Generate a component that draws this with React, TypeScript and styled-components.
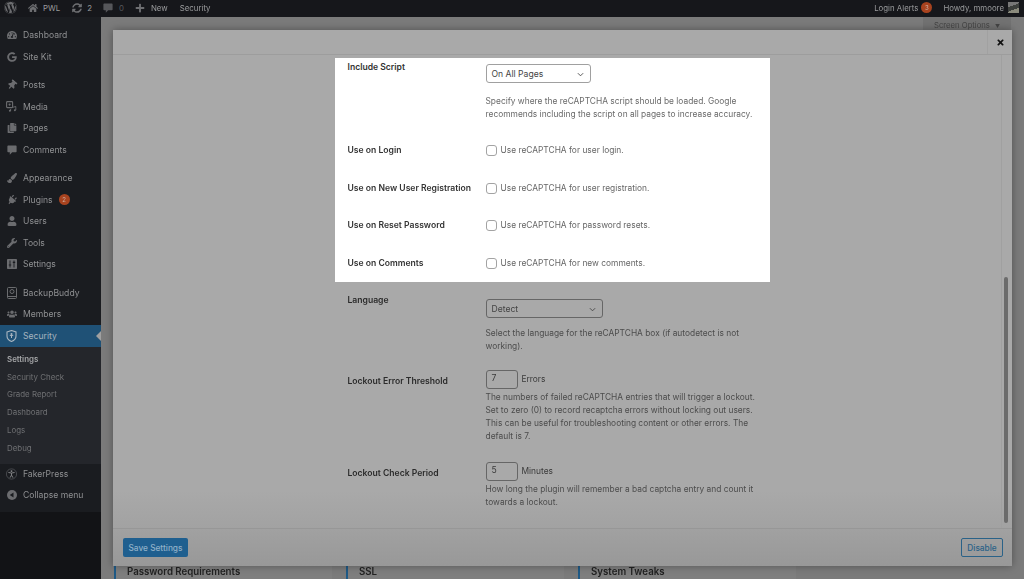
import React from "react";
import styled, { createGlobalStyle } from "styled-components";
import {
  FaWordpress, FaHome, FaSyncAlt, FaPlus, FaTachometerAlt, FaGoogle, FaThumbtack,
  FaCopy, FaPaintBrush, FaPlug, FaUser, FaWrench, FaUsers, FaTimes,
} from "react-icons/fa";

const Global = createGlobalStyle`
  html, body { margin: 0; padding: 0; height: 100%; overflow: hidden; background: #7b7b7b; }
  * { box-sizing: border-box; }
  body { font-family: Inter, "Liberation Sans", sans-serif; }
`;

const Frame = styled.div`
  width: 1024px; height: 579px; display: grid; grid-template-rows: 17px 1fr; grid-template-columns: 101px 1fr;
  overflow: hidden; filter: blur(0.45px); position: relative;
`;
const AdminBar = styled.header`
  grid-column: 1 / 3; background: #16171b; color: #9a9b9d; display: flex; align-items: center;
  font-size: 7.85px; padding: 0 5px 2px 4px;
`;
const BarItem = styled.span<{ $gap?: number; $after?: number; $dim?: boolean }>`
  display: inline-flex; align-items: center; gap: ${(p) => p.$gap ?? 5}px; margin-right: ${(p) => p.$after ?? 11}px;
  color: ${(p) => (p.$dim ? "#55565a" : "#9a9b9d")}; white-space: nowrap;
  svg { color: #6d6e71; font-size: 10px; }
`;
const BarSpacer = styled.div` flex: 1; `;
const Badge = styled.span`
  display: inline-flex; align-items: center; justify-content: center; width: 11px; height: 11px;
  border-radius: 50%; background: #a8431f; color: #c9a79a; font-size: 6px; font-weight: 500;
`;
const Avatar = styled.span`
  width: 11px; height: 11px; background: linear-gradient(160deg, #777 0 35%, #3c3f3c 35% 65%, #8a8a7c 65%); margin-left: 4px;
`;
const Sidebar = styled.nav`
  background: #121316; color: #8f9092; font-size: 8.6px; display: flex; flex-direction: column;
`;
const Menu = styled.div`
  background: #1a1c20; height: 495px; padding-top: 7.5px; display: flex; flex-direction: column; flex: none;
`;
const Item = styled.div<{ $active?: boolean; $gapBefore?: number; $h?: number }>`
  height: ${(p) => p.$h ?? 21.5}px; display: flex; align-items: center; padding-left: 6px; gap: 6px; position: relative; flex: none;
  margin-top: ${(p) => p.$gapBefore ?? 0}px;
  background: ${(p) => (p.$active ? "#1f5176" : "transparent")};
  color: ${(p) => (p.$active ? "#a6b4bf" : "#8f9092")};
  ${(p) => p.$active && `&::after { content: ""; position: absolute; right: 0; top: 6px; border: 5px solid transparent; border-right-color: #a0a0a0; border-left-width: 0; }`}
`;
const IconSlot = styled.span<{ $tilt?: number }>`
  width: 11px; height: 11px; display: inline-flex; align-items: center; justify-content: center; color: #6b6c6f; font-size: 10px; flex: none;
  svg { display: block; transform: rotate(${(p) => p.$tilt ?? 0}deg); }
`;
const Submenu = styled.div`
  background: #24262b; padding: 3.5px 0 7px 7px; display: flex; flex-direction: column; color: #6f7073; font-size: 7.9px;
`;
const SubItem = styled.div<{ $current?: boolean }>`
  height: 17.8px; display: flex; align-items: center;
  ${(p) => p.$current && `color: #a4a5a7; font-weight: 600;`}
`;
const Page = styled.main`
  position: relative; background: #7b7b7b; display: flex; flex-direction: column; justify-content: space-between; overflow: hidden; padding-left: 13px;
`;
const ScreenTab = styled.div`
  align-self: flex-end; margin-right: 13px; width: 88px; height: 13px; background: #727272; color: #444;
  font-size: 7.7px; display: flex; align-items: center; gap: 5px; padding: 4px 0 0 11px; white-space: nowrap;
`;
const Caret = styled.span` font-size: 5px; `;
const CardRow = styled.div` display: flex; gap: 14px; height: 14px; `;
const Card = styled.section`
  width: 218px; height: 40px; background: #7f7f7f; border-left: 2px solid #1f5a86; padding: 1px 0 0 11px;
  font-size: 9.7px; font-weight: 600; color: #222; white-space: nowrap;
`;
const Modal = styled.div`
  position: absolute; left: 12px; top: 13px; width: 899px; height: 536px; background: #a9a9a9;
  display: flex; flex-direction: column; box-shadow: 0 0 8px rgba(0,0,0,.35); color: #2b2b2b;
`;
const ModalHeader = styled.div`
  height: 25px; flex: none; border-bottom: 1px solid #9d9d9d; display: flex; justify-content: flex-end;
`;
const CloseBox = styled.div`
  width: 25px; border-left: 1px solid #a1a1a1; display: flex; align-items: center; justify-content: center; color: #111; font-size: 9px;
`;
const ModalBody = styled.div`
  flex: 1; min-height: 0; display: flex; overflow: hidden;
  background: linear-gradient(to bottom, #a9a9a9 0 92%, #a2a2a2 100%);
`;
const ScrollPane = styled.div`
  flex: 1; border-right: 1px solid #a0a0a0; margin-right: 2px; display: flex; flex-direction: column; align-items: center; padding: 3px 0 0 0;
`;
const Form = styled.div` width: 435px; margin-left: -10px; display: flex; flex-direction: column; flex: none; `;
const Spotlight = styled.div` background: #fff; color: #333; padding: 0 13px; height: 224px; flex: none; `;
const Dimmed = styled.div` padding: 0 13px; color: #2b2b2b; `;
const Row = styled.div<{ $h: number }>`
  display: grid; grid-template-columns: 138px 1fr; height: ${(p) => p.$h}px;
`;
const Label = styled.div<{ $top?: number }>`
  font-size: 8.6px; font-weight: 600; line-height: 12px; padding-top: ${(p) => p.$top ?? 0}px; white-space: nowrap;
`;
const Field = styled.div<{ $top?: number }>`
  padding-top: ${(p) => p.$top ?? 0}px; font-size: 8.4px; line-height: 13px; white-space: nowrap;
`;
const Select = styled.div<{ $w: number; $dim?: boolean; $after: number }>`
  width: ${(p) => p.$w}px; height: 19px; border: 1px solid ${(p) => (p.$dim ? "#666" : "#a0a0a0")}; border-radius: 3px; display: flex; align-items: center;
  justify-content: space-between; padding: 1px 6px 0 5px; font-size: 8.6px; color: #444; margin-bottom: ${(p) => p.$after}px;
`;
const Desc = styled.div<{ $light?: boolean }>`
  color: ${(p) => (p.$light ? "#6a6a6a" : "#4c4c4c")}; font-size: 8.4px; line-height: 13px;
`;
const CheckLine = styled.div` display: flex; align-items: center; gap: 4px; color: #666; font-size: 8.4px; `;
const Box = styled.span` width: 11px; height: 11px; border: 1px solid #a3a3a3; border-radius: 3px; background: #fff; flex: none; `;
const NumberLine = styled.div` display: flex; align-items: center; gap: 4px; margin-bottom: 2px; color: #3a3a3a; `;
const NumberBox = styled.div`
  width: 32px; height: 19px; border: 1px solid #666; border-radius: 3px; padding: 0 0 2px 5px; display: flex; align-items: center; font-size: 8.6px;
`;
const ScrollTrack = styled.div` width: 6px; margin-right: 2px; display: flex; flex-direction: column; justify-content: flex-end; padding-bottom: 5px; `;
const ScrollThumb = styled.div` width: 4px; height: 246px; background: #6b6b6b; border-radius: 2px; `;
const ModalFooter = styled.div`
  height: 38px; flex: none; border-top: 1px solid #979797; background: linear-gradient(#a1a1a1, #989898); display: flex; align-items: center;
  justify-content: space-between; padding: 0 9px 0 10px;
`;
const PrimaryButton = styled.button`
  width: 65px; height: 19px; border: 0; border-radius: 2px; background: #1f5f8f; color: #8fb0c8; font: 500 8.3px Inter, sans-serif; padding: 0;
`;
const SecondaryButton = styled.button`
  width: 42px; height: 19px; border: 1px solid #2a6288; border-radius: 2px; background: transparent; color: #2a6288; font: 500 8.3px Inter, sans-serif; padding: 0;
`;

const Chevron = () => (
  <svg width="7" height="5" viewBox="0 0 8 5"><path d="M1 1l3 3 3-3" fill="none" stroke="#444" strokeWidth="1" /></svg>
);
const Shield = () => (
  <svg width="11" height="12" viewBox="0 0 11 12"><path d="M1 2l4.5-1.5L10 2v4c0 3-2.5 4.7-4.5 5.5C3.5 10.7 1 9 1 6z" fill="none" stroke="#a9b6c0" strokeWidth="1.1" /><circle cx="5.5" cy="4" r="1" fill="#a9b6c0" /><path d="M5.5 5v3M3.8 5.4h3.4" stroke="#a9b6c0" /></svg>
);
const Backup = () => (
  <svg width="10" height="12" viewBox="0 0 10 12"><rect x=".5" y=".5" width="9" height="11" rx="1" fill="none" stroke="#6b6c6f" /><circle cx="5" cy="4.5" r="2" fill="none" stroke="#6b6c6f" /><path d="M1 9.5h8" stroke="#6b6c6f" /></svg>
);
const Collapse = () => (
  <svg width="10" height="10" viewBox="0 0 10 10"><circle cx="5" cy="5" r="5" fill="#6b6c6f" /><path d="M6.5 2.4v5.2L2.8 5z" fill="#1a1c20" /></svg>
);
const Bubble = ({ size = 10, color = "#6b6c6f" }: { size?: number; color?: string }) => (
  <svg width={size} height={size} viewBox="0 0 10 10"><path d="M1.2 0.5h7.6a.8.8 0 0 1 .8.8v5.2a.8.8 0 0 1-.8.8H5.2L2.8 9.8V7.3H1.2a.8.8 0 0 1-.8-.8V1.3a.8.8 0 0 1 .8-.8z" fill={color} /></svg>
);
const MediaIcon = () => (
  <svg width="11" height="11" viewBox="0 0 11 11"><rect x=".6" y=".6" width="6" height="6" rx=".8" fill="none" stroke="#6b6c6f" strokeWidth="1.1" /><circle cx="3.6" cy="3.6" r="1.1" fill="#6b6c6f" /><path d="M4.6 10V8M9.8 9V5.5L6.5 6.4" fill="none" stroke="#6b6c6f" strokeWidth=".9" /><circle cx="3.9" cy="9.8" r="1" fill="#6b6c6f" /><circle cx="8.9" cy="9.2" r="1" fill="#6b6c6f" /></svg>
);
const SettingsIcon = () => (
  <svg width="10" height="10" viewBox="0 0 10 10"><rect width="10" height="10" rx=".8" fill="#6b6c6f" /><path d="M3 1.5v7M7 1.5v7" stroke="#1a1c20" strokeWidth=".9" /><path d="M1.8 6h2.4M5.8 3.4h2.4" stroke="#1a1c20" strokeWidth="1.1" /></svg>
);
const Figure = () => (
  <svg width="12" height="12" viewBox="0 0 12 12"><circle cx="6" cy="6" r="5.6" fill="none" stroke="#6b6c6f" strokeWidth=".6" /><circle cx="6" cy="2.8" r="1" fill="#8a8b8d" /><path d="M2.6 4.3L6 5l3.4-.7M6 5v2.2M6 7.2L4.4 10M6 7.2L7.6 10" fill="none" stroke="#8a8b8d" strokeWidth="1" /></svg>
);

type Entry = { icon: React.ReactNode; t: string; badge?: string; tilt?: number };
const first: Entry[] = [
  { icon: <FaTachometerAlt />, t: "Dashboard" },
  { icon: <FaGoogle />, t: "Site Kit" },
];
const second: Entry[] = [
  { icon: <FaThumbtack />, t: "Posts", tilt: 40 },
  { icon: <MediaIcon />, t: "Media" },
  { icon: <FaCopy />, t: "Pages" },
  { icon: <Bubble />, t: "Comments" },
];
const third: Entry[] = [
  { icon: <FaPaintBrush />, t: "Appearance" },
  { icon: <FaPlug />, t: "Plugins", badge: "2", tilt: 40 },
  { icon: <FaUser />, t: "Users" },
  { icon: <FaWrench />, t: "Tools" },
  { icon: <SettingsIcon />, t: "Settings" },
];
const subs = ["Security Check", "Grade Report", "Dashboard", "Logs", "Debug"];
const checks = [
  ["Use on Login", "Use reCAPTCHA for user login."],
  ["Use on New User Registration", "Use reCAPTCHA for user registration."],
  ["Use on Reset Password", "Use reCAPTCHA for password resets."],
  ["Use on Comments", "Use reCAPTCHA for new comments."],
];

export default function App() {
  const renderItem = (i: Entry, gap?: number) => (
    <Item key={i.t} $gapBefore={gap}>
      <IconSlot $tilt={i.tilt}>{i.icon}</IconSlot>
      {i.t}
      {i.badge && <Badge>{i.badge}</Badge>}
    </Item>
  );
  return (
    <Frame>
      <Global />
      <AdminBar>
        <BarItem $after={11}><FaWordpress style={{ fontSize: 13 }} /></BarItem>
        <BarItem $after={12}><FaHome />PWL</BarItem>
        <BarItem><FaSyncAlt />2</BarItem>
        <BarItem $dim $gap={6}><Bubble color="#55565a" />0</BarItem>
        <BarItem $gap={6} $after={12}><FaPlus />New</BarItem>
        <BarItem>Security</BarItem>
        <BarSpacer />
        <BarItem $gap={3}>Login Alerts<Badge>3</Badge></BarItem>
        <BarItem $after={0} $gap={0}>Howdy, mmoore<Avatar /></BarItem>
      </AdminBar>
      <Sidebar>
        <Menu>
          {first.map((i) => renderItem(i))}
          {second.map((i, n) => renderItem(i, n === 0 ? 7 : 0))}
          {third.map((i, n) => renderItem(i, n === 0 ? 7 : 0))}
          <Item $gapBefore={7}><IconSlot><Backup /></IconSlot>BackupBuddy</Item>
          <Item><IconSlot><FaUsers /></IconSlot>Members</Item>
          <Item $active><IconSlot><Shield /></IconSlot>Security</Item>
          <Submenu>
            <SubItem $current>Settings</SubItem>
            {subs.map((s) => <SubItem key={s}>{s}</SubItem>)}
          </Submenu>
          <Item $h={20.5}><IconSlot><Figure /></IconSlot>FakerPress</Item>
          <Item><IconSlot><Collapse /></IconSlot>Collapse menu</Item>
        </Menu>
      </Sidebar>
      <Page>
        <ScreenTab>Screen Options <Caret>▼</Caret></ScreenTab>
        <CardRow>
          <Card>Password Requirements</Card>
          <Card>SSL</Card>
          <Card>System Tweaks</Card>
        </CardRow>
        <Modal>
          <ModalHeader><CloseBox><FaTimes /></CloseBox></ModalHeader>
          <ModalBody>
            <ScrollPane>
              <Form>
                <Spotlight>
                  <Row $h={72}>
                    <Label $top={2.5}>Include Script</Label>
                    <Field $top={6}>
                      <Select $w={105} $after={12}>On All Pages<Chevron /></Select>
                      <Desc $light>Specify where the reCAPTCHA script should be loaded. Google<br />recommends including the script on all pages to increase accuracy.</Desc>
                    </Field>
                  </Row>
                  {checks.map(([l, d], n) => (
                    <Row key={l} $h={n === 3 ? 37 : 37.7}>
                      <Label $top={14}>{l}</Label>
                      <Field $top={14}><CheckLine><Box />{d}</CheckLine></Field>
                    </Row>
                  ))}
                </Spotlight>
                <Dimmed>
                  <Row $h={81}>
                    <Label $top={12}>Language</Label>
                    <Field $top={17}>
                      <Select $w={117} $dim $after={9}>Detect<Chevron /></Select>
                      <Desc>Select the language for the reCAPTCHA box (if autodetect is not<br />working).</Desc>
                    </Field>
                  </Row>
                  <Row $h={92}>
                    <Label $top={12}>Lockout Error Threshold</Label>
                    <Field $top={7}>
                      <NumberLine><NumberBox>7</NumberBox>Errors</NumberLine>
                      <Desc>The numbers of failed reCAPTCHA entries that will trigger a lockout.<br />Set to zero (0) to record recaptcha errors without locking out users.<br />This can be useful for troubleshooting content or other errors. The<br />default is 7.</Desc>
                    </Field>
                  </Row>
                  <Row $h={60}>
                    <Label $top={12}>Lockout Check Period</Label>
                    <Field $top={7}>
                      <NumberLine><NumberBox>5</NumberBox>Minutes</NumberLine>
                      <Desc>How long the plugin will remember a bad captcha entry and count it<br />towards a lockout.</Desc>
                    </Field>
                  </Row>
                </Dimmed>
              </Form>
            </ScrollPane>
            <ScrollTrack><ScrollThumb /></ScrollTrack>
          </ModalBody>
          <ModalFooter>
            <PrimaryButton>Save Settings</PrimaryButton>
            <SecondaryButton>Disable</SecondaryButton>
          </ModalFooter>
        </Modal>
      </Page>
    </Frame>
  );
}
